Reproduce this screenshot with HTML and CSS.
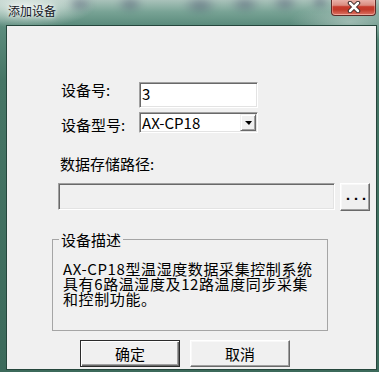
FILE: index.html
```html
<!DOCTYPE html>
<html lang="zh-CN">
<head>
    <meta charset="UTF-8">
    <title>添加设备</title>
    <link rel="stylesheet" href="styles.css">
</head>
<body>
    <div class="window">
        <div class="titlebar">
            <div class="glass-blur"></div>
            <span class="title">添加设备</span>
            <button class="close-btn" title="关闭">
                <svg width="14" height="12" viewBox="0 0 14 12">
                    <path d="M3 2 L11 10 M11 2 L3 10" stroke="#3a2a2a" stroke-width="4.5" stroke-linecap="round"/>
                    <path d="M3 2 L11 10 M11 2 L3 10" stroke="#ffffff" stroke-width="2.5" stroke-linecap="round"/>
                </svg>
            </button>
        </div>

        <div class="client">
            <div class="field-row first">
                <label class="field-label">设备号:</label>
                <input class="text-input" type="text" value="3">
            </div>
            <div class="field-row">
                <label class="field-label second">设备型号:</label>
                <div class="combo">
                    <span class="combo-value">AX-CP18</span>
                    <span class="combo-arrow"><i></i></span>
                </div>
            </div>

            <div class="path-label">数据存储路径:</div>
            <div class="path-row">
                <input class="path-input" type="text" disabled>
                <button class="browse-btn">...</button>
            </div>

            <fieldset class="group">
                <legend>设备描述</legend>
                <p>AX-CP18型温湿度数据采集控制系统<br>具有6路温湿度及12路温度同步采集<br>和控制功能。</p>
            </fieldset>

            <div class="actions">
                <button class="btn btn-default">确定</button>
                <button class="btn">取消</button>
            </div>
        </div>
    </div>
</body>
</html>
```
FILE: styles.css
```css
body {
    margin: 0;
    font-family: "Noto Sans CJK SC", "Liberation Sans", sans-serif;
    color: #000000;
}

.window {
    width: 379px;
    height: 372px;
    display: flex;
    flex-direction: column;
    background:
        radial-gradient(ellipse 70px 22px at 25px 6px, rgba(235, 242, 238, 0.9), rgba(235, 242, 238, 0) 100%),
        radial-gradient(ellipse 60px 20px at 350px 22px, rgba(200, 215, 210, 0.6), rgba(200, 215, 210, 0) 100%),
        linear-gradient(to bottom, #a9c2ba 0, #78a395 12px, #5d8d7e 24px, #467565 80px, #3c6a5b 100%);
}

.titlebar {
    position: relative;
    height: 25px;
    display: flex;
    justify-content: space-between;
    align-items: flex-start;
    padding: 0 3px 0 8px;
    flex-shrink: 0;
}

/* blurred stuff behind the aero glass */
.glass-blur {
    position: absolute;
    top: -4px;
    left: 70px;
    width: 260px;
    height: 20px;
    filter: blur(3px);
    opacity: 0.45;
    background:
        radial-gradient(ellipse 14px 9px at 10px 8px, #3c3f63, transparent),
        radial-gradient(ellipse 14px 9px at 60px 8px, #3c3f63, transparent),
        radial-gradient(ellipse 18px 10px at 130px 9px, #3c3f63, transparent),
        radial-gradient(ellipse 16px 9px at 175px 8px, #3c3f63, transparent),
        radial-gradient(ellipse 14px 9px at 215px 7px, #3c3f63, transparent),
        radial-gradient(ellipse 10px 8px at 250px 6px, #3c3f63, transparent);
}

.title {
    position: relative;
    font-size: 12px;
    line-height: 16px;
    padding-top: 3px;
    color: #14161f;
    text-shadow: 0 0 6px rgba(255, 255, 255, 0.9), 0 0 3px rgba(255, 255, 255, 0.8);
}

.close-btn {
    position: relative;
    width: 45px;
    height: 16px;
    margin: 0;
    padding: 0;
    border: 1px solid #5e2a26;
    border-top: none;
    border-radius: 0 0 4px 4px;
    background: linear-gradient(to bottom, #e9b1a8 0, #da8c80 35%, #c63b2c 45%, #c23a2a 65%, #dd7566 100%);
    box-shadow: inset 0 -1px 0 rgba(255, 200, 190, 0.6), inset 1px 0 0 rgba(255, 200, 190, 0.4), inset -1px 0 0 rgba(255, 200, 190, 0.4);
    display: flex;
    align-items: center;
    justify-content: center;
}

.close-btn svg {
    display: block;
    margin-top: -1px;
}

.client {
    flex: 1;
    margin: 0 2px 2px 6px;
    border: 1px solid #25463c;
    background: #f0f0f0;
    font-size: 15px;
    line-height: 15px;
}

.field-row {
    display: flex;
    align-items: flex-start;
    margin: 4px 0 0 54px;
}

.field-row.first {
    margin-top: 56px;
}

.field-label {
    width: 78px;
    flex-shrink: 0;
    line-height: 15px;
}

.field-label.second {
    margin-top: 5px;
}

.text-input {
    width: 119px;
    height: 26px;
    box-sizing: border-box;
    margin: 0;
    padding: 0 2px 4px;
    border: 1px solid;
    border-color: #a0a0a0 #ffffff #ffffff #a0a0a0;
    box-shadow: inset 1px 1px 0 #696969, inset -1px -1px 0 #e3e3e3;
    background: #ffffff;
    font: 15px "Noto Sans CJK SC", sans-serif;
    color: #000000;
    outline: none;
}

.combo {
    width: 119px;
    height: 21px;
    box-sizing: border-box;
    padding: 1px;
    display: flex;
    align-items: center;
    justify-content: space-between;
    border: 1px solid;
    border-color: #a0a0a0 #ffffff #ffffff #a0a0a0;
    box-shadow: inset 1px 1px 0 #696969, inset -1px -1px 0 #e3e3e3;
    background: #ffffff;
}

.combo-value {
    padding-left: 1px;
    line-height: 15px;
}

.combo-arrow {
    width: 16px;
    height: 17px;
    box-sizing: border-box;
    display: flex;
    align-items: center;
    justify-content: center;
    background: #f0f0f0;
    border: 1px solid;
    border-color: #f0f0f0 #696969 #696969 #f0f0f0;
    box-shadow: inset 1px 1px 0 #ffffff, inset -1px -1px 0 #a0a0a0;
}

.combo-arrow i {
    width: 0;
    height: 0;
    border-left: 4px solid transparent;
    border-right: 3px solid transparent;
    border-top: 4px solid #000000;
    margin-top: 1px;
}

.path-label {
    margin: 23px 0 0 53px;
}

.path-row {
    display: flex;
    align-items: flex-start;
    gap: 5px;
    margin: 12px 0 0 51px;
}

.path-input {
    width: 277px;
    height: 27px;
    box-sizing: border-box;
    margin: 0;
    border: 1px solid;
    border-color: #a0a0a0 #ffffff #ffffff #a0a0a0;
    box-shadow: inset 1px 1px 0 #696969, inset -1px -1px 0 #e3e3e3;
    background: #f0f0f0;
}

.browse-btn,
.btn {
    margin: 0;
    padding: 0;
    background: #f0f0f0;
    border: 1px solid;
    border-color: #ffffff #696969 #696969 #ffffff;
    box-shadow: inset -1px -1px 0 #a0a0a0, inset 1px 1px 0 #f8f8f8;
    color: #000000;
    cursor: pointer;
}

.browse-btn {
    width: 30px;
    height: 28px;
    font: bold 15px "Liberation Mono", monospace;
    letter-spacing: -1px;
    line-height: 24px;
    padding-left: 1px;
}

.group {
    width: 276px;
    box-sizing: border-box;
    margin: 21px 0 0 45px;
    padding: 0 0 24px 6px;
    border: 1px solid #a5a5a5;
    min-inline-size: 0;
}

.group legend {
    padding: 0 2px;
    line-height: 15px;
}

.group p {
    margin: 14px 0 0 4px;
    line-height: 15px;
    letter-spacing: 0.6px;
    white-space: nowrap;
}

.actions {
    display: flex;
    gap: 10px;
    margin: 9px 0 0 73px;
}

.btn {
    width: 100px;
    height: 27px;
    font: 15px "Noto Sans CJK SC", sans-serif;
    line-height: 15px;
}

.btn-default {
    border-color: #2b2b2b;
    box-shadow: inset 1px 1px 0 #ffffff, inset -1px -1px 0 #696969, inset -2px -2px 0 #a0a0a0;
}
```
